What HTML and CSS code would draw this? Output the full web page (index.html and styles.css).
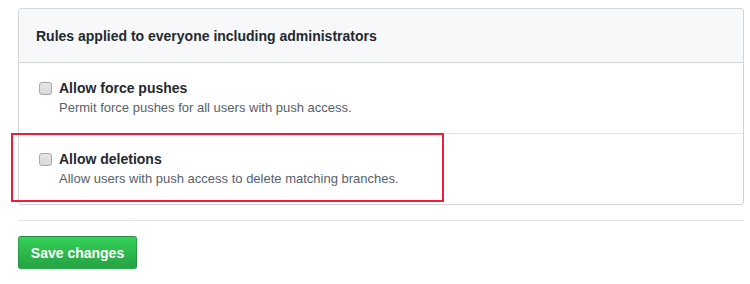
FILE: index.html
```html
<!DOCTYPE html>
<html>
<head>
<meta charset="utf-8">
<link rel="stylesheet" href="styles.css">
</head>
<body>
<div class="page">
  <div class="box">
    <div class="box-header">Rules applied to everyone including administrators</div>
    <div class="box-row">
      <label class="opt">
        <input type="checkbox" class="cb">
        <span class="opt-text">
          <span class="opt-title">Allow force pushes</span>
          <span class="opt-desc">Permit force pushes for all users with push access.</span>
        </span>
      </label>
    </div>
    <div class="box-row highlight-row">
      <label class="opt">
        <input type="checkbox" class="cb">
        <span class="opt-text">
          <span class="opt-title">Allow deletions</span>
          <span class="opt-desc">Allow users with push access to delete matching branches.</span>
        </span>
      </label>
      <div class="annot"></div>
    </div>
  </div>
  <hr class="sep">
  <button class="btn">Save changes</button>
</div>
</body>
</html>
```

FILE: styles.css
```css
html, body {
  margin: 0;
  padding: 0;
  background: #fff;
}
body {
  font-family: "Liberation Sans", Arial, sans-serif;
  color: #24292e;
  font-size: 14px;
}
.page {
  padding: 8px 6px 0 18px;
}
.box {
  border: 1px solid #d1d5da;
  border-radius: 3px;
}
.box-header {
  background: #f6f8fa;
  border-bottom: 1px solid #d1d5da;
  border-radius: 3px 3px 0 0;
  padding: 0 17px;
  height: 53px;
  display: flex;
  align-items: center;
  font-weight: bold;
  font-size: 14px;
}
.box-row {
  height: 70px;
  padding: 0 20px 2px 20px;
  box-sizing: border-box;
  display: flex;
  align-items: center;
  position: relative;
}
.box-row + .box-row {
  border-top: 1px solid #e1e4e8;
  height: 71px;
}
.opt {
  display: flex;
  align-items: flex-start;
  gap: 7px;
}
.cb {
  -webkit-appearance: none;
  appearance: none;
  margin: 4px 0 0 0;
  width: 13px;
  height: 13px;
  border: 1px solid #a8a8a8;
  border-radius: 3px;
  background: linear-gradient(#e6e6e6, #d9d9d9);
  box-sizing: border-box;
}
.opt-text {
  display: flex;
  flex-direction: column;
}
.opt-title {
  font-weight: bold;
  font-size: 14px;
  line-height: 20px;
}
.opt-desc {
  font-size: 13px;
  color: #586069;
  line-height: 19px;
}
.annot {
  position: absolute;
  left: -8px;
  top: -1px;
  width: 429px;
  height: 65px;
  border: 2px solid #f01c3c;
  pointer-events: none;
}
.sep {
  border: 0;
  border-top: 1px solid #e1e4e8;
  margin: 15px 0 15px 0;
  height: 0;
}
.btn {
  font-family: "Liberation Sans", Arial, sans-serif;
  font-weight: bold;
  font-size: 14px;
  color: #fff;
  width: 119px;
  height: 33px;
  padding: 0;
  border: 1px solid rgba(27,31,35,0.2);
  border-radius: 3px;
  background: linear-gradient(#34d058, #28a745 90%);
}
```
